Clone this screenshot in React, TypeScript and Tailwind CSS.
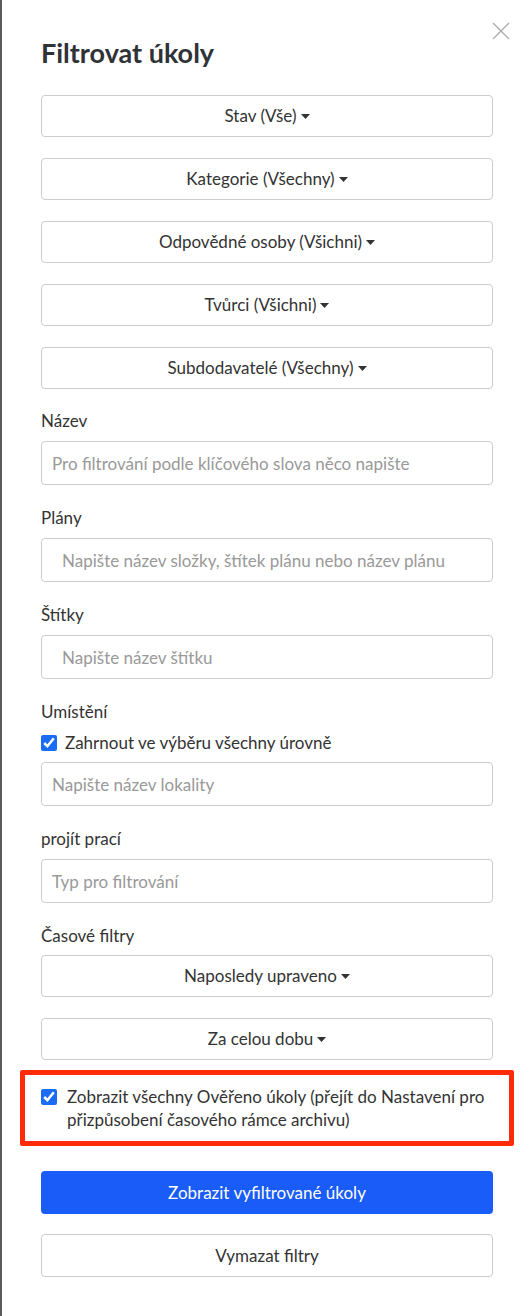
import React from 'react';

const Caret: React.FC = () => (
  <svg className="ml-1 inline-block" width="9" height="5" viewBox="0 0 9 5" fill="#333">
    <path d="M0 0h9L4.5 5z" />
  </svg>
);

const DropButton: React.FC<{ label: string }> = ({ label }) => (
  <button
    type="button"
    className="flex h-[42px] w-full items-center justify-center rounded-[4px] border border-[#cccccc] bg-white text-[17px] text-[#333]"
  >
    {label}
    <Caret />
  </button>
);

const TextField: React.FC<{ label: string; placeholder: string; indent?: boolean }> = ({ label, placeholder, indent }) => (
  <div className="flex flex-col">
    <label className="mb-[9px] text-[17px] leading-[22px] text-[#333]">{label}</label>
    <input
      type="text"
      placeholder={placeholder}
      className={`h-[44px] w-full rounded-[4px] border border-[#cccccc] text-[17px] text-[#333] outline-none placeholder:text-[#999] ${indent ? 'px-[20px]' : 'px-[10px]'}`}
    />
  </div>
);

export default function App() {
  return (
    <div
      className="relative min-h-[1316px] w-full border-l-2 border-[#5a5a5a] bg-white pl-[39px] pr-[39px] pt-[37px]"
      style={{ fontFamily: 'Lato, "Open Sans", sans-serif' }}
    >
      <button type="button" className="absolute right-[22px] top-[22px] text-[#aaa]" aria-label="Zavřít">
        <svg width="18" height="18" viewBox="0 0 18 18" stroke="currentColor" strokeWidth="1.3">
          <path d="M1 1l16 16M17 1L1 17" />
        </svg>
      </button>

      <h2 className="mb-[26px] text-[27px] font-bold leading-[32px] text-[#2f3237]">Filtrovat úkoly</h2>

      <div className="flex flex-col gap-[21px]">
        <DropButton label="Stav (Vše)" />
        <DropButton label="Kategorie (Všechny)" />
        <DropButton label="Odpovědné osoby (Všichni)" />
        <DropButton label="Tvůrci (Všichni)" />
        <DropButton label="Subdodavatelé (Všechny)" />
      </div>

      <div className="mt-[21px] flex flex-col gap-[22px]">
        <TextField label="Název" placeholder="Pro filtrování podle klíčového slova něco napište" />
        <TextField label="Plány" placeholder="Napište název složky, štítek plánu nebo název plánu" indent />
        <TextField label="Štítky" placeholder="Napište název štítku" indent />

        {/* Umístění */}
        <div className="flex flex-col">
          <label className="text-[17px] leading-[22px] text-[#333]">Umístění</label>
          <label className="mt-[9px] flex items-center gap-[8px] text-[17px] leading-[22px] text-[#333]">
            <input type="checkbox" defaultChecked className="h-4 w-4 accent-[#1a6cf5]" />
            Zahrnout ve výběru všechny úrovně
          </label>
          <input
            type="text"
            placeholder="Napište název lokality"
            className="mt-[8px] h-[44px] w-full rounded-[4px] border border-[#cccccc] px-[10px] text-[17px] outline-none placeholder:text-[#999]"
          />
        </div>

        <TextField label="projít prací" placeholder="Typ pro filtrování" />

        <div className="flex flex-col">
          <label className="mb-[8px] text-[17px] leading-[22px] text-[#333]">Časové filtry</label>
          <div className="flex flex-col gap-[21px]">
            <DropButton label="Naposledy upraveno" />
            <DropButton label="Za celou dobu" />
          </div>
        </div>
      </div>

      <div className="-mx-[21px] mt-[10px] flex items-start gap-[10px] rounded-[2px] border-[5px] border-[#ff2a0a] py-[10px] pl-[16px] pr-[6px]">
        <input type="checkbox" defaultChecked className="mt-[4px] h-4 w-4 shrink-0 accent-[#1a6cf5]" />
        <span className="text-[17px] leading-[23px] text-[#333]">
          Zobrazit všechny Ověřeno úkoly (přejít do Nastavení pro přizpůsobení časového rámce archivu)
        </span>
      </div>

      <div className="mt-[25px] flex flex-col gap-[20px]">
        <button type="button" className="h-[43px] w-full rounded-[4px] bg-[#1a5cf8] text-[17px] text-white">
          Zobrazit vyfiltrované úkoly
        </button>
        <button type="button" className="h-[43px] w-full rounded-[4px] border border-[#cccccc] bg-white text-[17px] text-[#333]">
          Vymazat filtry
        </button>
      </div>
    </div>
  );
}
